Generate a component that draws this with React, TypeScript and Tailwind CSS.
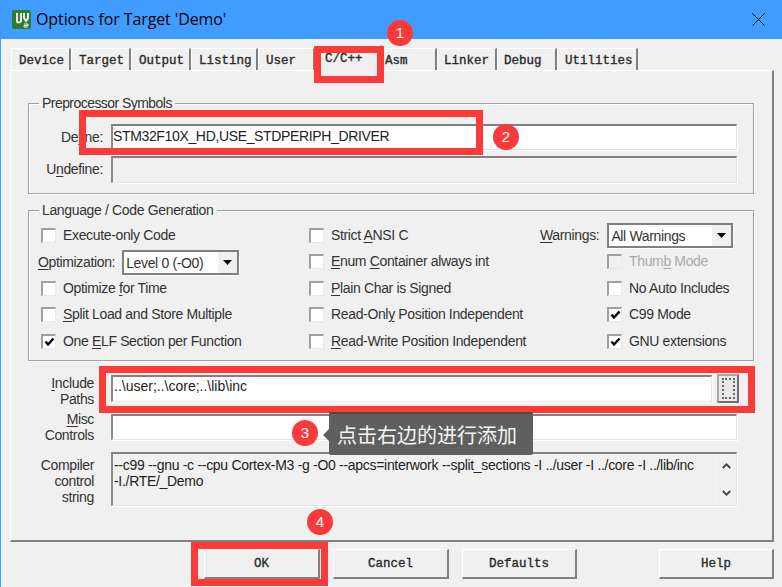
import React from "react";

const tabs = [
  { t: "Device", w: "w-[60px]", pl: "pl-[7px]" },
  { t: "Target", w: "w-[60px]", pl: "pl-[7px]" },
  { t: "Output", w: "w-[60px]", pl: "pl-[7px]" },
  { t: "Listing", w: "w-[67px]", pl: "pl-[7px]" },
  { t: "User", w: "w-[57px]", pl: "pl-[7px]" },
  { t: "C/C++", w: "w-[67px]", pl: "pl-[9px]", active: true },
  { t: "Asm", w: "w-[55px]", pl: "pl-[2px]" },
  { t: "Linker", w: "w-[60px]", pl: "pl-[6px]" },
  { t: "Debug", w: "w-[60px]", pl: "pl-[6px]" },
  { t: "Utilities", w: "w-[81px]", pl: "pl-[7px]" },
];

const monoCls = "font-['Liberation_Mono',monospace] text-[12.5px] tracking-normal text-[#2a2a2a] [-webkit-text-stroke:0.35px_#2a2a2a]";

function Tab({ t, w, pl, active }: { t: string; w: string; pl: string; active?: boolean }) {
  return active ? (
    <div className={`${w} ${pl} relative h-[26px] -mb-px border-t border-l border-white border-r-2 border-r-[#808080] bg-[#f0f0f0] pt-[4px] leading-[18px] ${monoCls}`}>
      {t}
    </div>
  ) : (
    <div className={`${w} ${pl} h-[22px] border-t border-l border-white border-r-2 border-r-[#808080] pt-[3px] leading-[18px] ${monoCls}`}>
      {t}
    </div>
  );
}

function U({ children }: { children: React.ReactNode }) {
  return <span className="underline underline-offset-2">{children}</span>;
}

function Box({ checked, disabled }: { checked?: boolean; disabled?: boolean }) {
  return (
    <span className={`flex size-[15px] shrink-0 items-center justify-center border-t-2 border-l-2 border-t-[#a0a0a0] border-l-[#a0a0a0] border-r border-b border-r-[#e8e8e8] border-b-[#e8e8e8] ${disabled ? "bg-[#f0f0f0]" : "bg-white"}`}>
      {checked && (
        <svg width="11" height="10" viewBox="0 0 11 10" fill="none">
          <path d="M1.5 4.5 L4 7.5 L9.5 1.5" stroke="#000" strokeWidth="2.4" />
        </svg>
      )}
    </span>
  );
}

function Check({ checked, disabled, children, cls = "pl-[12px]" }: { checked?: boolean; disabled?: boolean; children: React.ReactNode; cls?: string }) {
  return (
    <div className={`flex items-center gap-[7px] ${cls} ${disabled ? "text-[#aaa]" : ""}`}>
      <Box checked={checked} disabled={disabled} />
      <span>{children}</span>
    </div>
  );
}

function Select({ value, w, h }: { value: string; w: string; h: string }) {
  return (
    <div className={`${w} ${h} flex shrink-0 border-2 border-[#808080] bg-white shadow-[1px_1px_0_#fff]`}>
      <span className="flex-1 pl-[2px] leading-[22px]">{value}</span>
      <span className="flex w-[20px] items-center justify-center border-l border-white bg-[#f0f0f0]">
        <svg width="9" height="5" viewBox="0 0 9 5"><path d="M0 0h9L4.5 5z" fill="#000" /></svg>
      </span>
    </div>
  );
}

const inputCls = "border-t-2 border-l-2 border-t-[#808080] border-l-[#8a8a8a] border-r border-b border-r-[#e3e3e3] border-b-[#e3e3e3] shadow-[1px_1px_0_#fff]";

function Btn({ children, w, ml }: { children: string; w: string; ml: string }) {
  return (
    <div className={`${w} ${ml} flex h-[30px] items-center justify-center border-t border-l border-white border-r-2 border-b-2 border-r-[#808080] border-b-[#808080] bg-[#f0f0f0] pt-[2px] ${monoCls}`}>
      {children}
    </div>
  );
}

const fieldsetCls = "block w-[726px] border border-[#a0a0a0] shadow-[1px_1px_0_#fff,inset_1px_1px_0_#fff]";

export default function App() {
  return (
    <div className="relative h-[587px] w-[782px] overflow-hidden border-l border-[#409dff] bg-[#f0f0f0] font-['Liberation_Sans',sans-serif] text-[14px] tracking-[-0.35px] text-[#333]">
      <div className="flex h-[39px] items-center bg-[#409dff] pb-[1px]">
        <svg className="ml-[11px]" width="19" height="19" viewBox="0 0 19 19">
          <rect width="19" height="19" rx="2" fill="#2f7d32" />
          <path d="M5 3v8c0 2 3 2 4 0M9 3v9M12 3v5l2 3 2-3V3" stroke="#e8f3e8" strokeWidth="2" fill="none" />
          <path d="M12 14h4v1.5h-4V17h4" stroke="#e8f3e8" strokeWidth="1" fill="none" />
        </svg>
        <span className="ml-[5px] font-['Open_Sans',sans-serif] text-[16px] tracking-[-0.1px] text-black">Options for Target 'Demo'</span>
        <svg className="ml-auto mr-[17px]" width="13" height="13" viewBox="0 0 13 13"><path d="M.5.5l12 12M12.5.5l-12 12" stroke="#000" strokeWidth="1" /></svg>
      </div>

      <div className="flex h-[31px] items-end pl-[10px]">
        {tabs.map((x) => <Tab key={x.t} {...x} />)}
      </div>

      <div className="ml-[9px] h-[472px] w-[764px] border-t border-l border-t-white border-l-white border-r-2 border-b-2 border-r-[#808080] border-b-[#808080] pl-[17px] pt-[22px]">
        <fieldset className={`${fieldsetCls} h-[101px]`}>
          <legend className="ml-[10px] px-[3px] leading-[20px] tracking-[-0.55px]">Preprocessor Symbols</legend>
          <div className="grid grid-cols-[74px_626px] gap-x-[8px] gap-y-[6px] pt-[11px]">
            <div className="text-right leading-[26px]">De<U>f</U>ine:</div>
            <div className={`${inputCls} h-[26px] bg-white leading-[20px] text-[#222]`}>STM32F10X_HD,USE_STDPERIPH_DRIVER</div>
            <div className="text-right leading-[27px]">U<U>n</U>define:</div>
            <div className={`${inputCls} h-[27px]`} />
          </div>
        </fieldset>

        <fieldset className={`${fieldsetCls} mt-[6px] h-[161px]`}>
          <legend className="ml-[10px] px-[3px] leading-[20px]">Language / Code Generation</legend>
          <div className="grid grid-cols-[280px_231px_1fr] auto-rows-[26.5px] items-center pt-[2px]">
            <Check>Execute-only Code</Check>
            <Check cls="">Strict <U>A</U>NSI C</Check>
            <div className="flex items-center gap-[8px]">
              <span><U>W</U>arnings:</span>
              <Select value="All Warnings" w="w-[126px]" h="h-[25px]" />
            </div>

            <div className="mt-[1px] flex items-center gap-[7px] pl-[9px]">
              <span><U>O</U>ptimization:</span>
              <Select value="Level 0 (-O0)" w="w-[117px]" h="h-[25px]" />
            </div>
            <Check cls=""><U>E</U>num <U>C</U>ontainer always int</Check>
            <Check disabled cls="pl-[67px]">Thum<U>b</U> Mode</Check>

            <Check>Optimize <U>f</U>or Time</Check>
            <Check cls=""><U>P</U>lain Char is Signed</Check>
            <Check cls="pl-[67px]">No Auto Includes</Check>

            <Check><U>S</U>plit Load and Store Multiple</Check>
            <Check cls="">Read-Onl<U>y</U> Position Independent</Check>
            <Check checked cls="pl-[67px]">C99 Mode</Check>

            <Check checked>One <U>E</U>LF Section per Function</Check>
            <Check cls=""><U>R</U>ead-Write Position Independent</Check>
            <Check checked cls="pl-[67px]">GNU extensions</Check>
          </div>
        </fieldset>

        <div className="mt-[13px] grid grid-cols-[66px_628px] gap-x-[17px] leading-[16px]">
          <div className="pt-[1px] text-right"><U>I</U>nclude<br />Paths</div>
          <div className="flex items-start gap-[5px]">
            <div className={`${inputCls} mt-[1px] h-[27px] w-[601px] bg-white pl-[1px] leading-[18px] tracking-normal text-[#222]`}>..\user;..\core;..\lib\inc</div>
            <div className="flex h-[29px] w-[22px] items-center justify-center border-2 border-t-[#a8a8a8] border-l-[#a8a8a8] border-r-[#707070] border-b-[#707070] bg-[#e8e8e8]">
              <span className="h-[21px] w-[13px] border-2 border-dotted border-[#666]" />
            </div>
          </div>

          <div className="mt-[4px] text-right"><U>M</U>isc<br />Controls</div>
          <div className={`${inputCls} mt-[7px] h-[26px] w-[626px] bg-white`} />

          <div className="mt-[14px] text-right">Compiler<br />control<br />string</div>
          <div className={`${inputCls} mt-[9px] flex h-[54px] w-[626px] text-[#222]`}>
            <div className="flex-1 pl-[1px] pt-[3px] tracking-[-0.3px]">--c99 --gnu -c --cpu Cortex-M3 -g -O0 --apcs=interwork --split_sections -I ../user -I ../core -I ../lib/inc<br />-I./RTE/_Demo</div>
            <div className="flex w-[21px] flex-col items-center justify-between border-l border-[#f8f8f8] py-[9px]">
              <svg width="9" height="6" viewBox="0 0 9 6"><path d="M.8 5L4.5 1.3 8.2 5" stroke="#444" strokeWidth="1.8" fill="none" /></svg>
              <svg width="9" height="6" viewBox="0 0 9 6"><path d="M.8 1L4.5 4.7 8.2 1" stroke="#444" strokeWidth="1.8" fill="none" /></svg>
            </div>
          </div>
        </div>
      </div>

      <div className="mt-[7px] flex">
        <Btn w="w-[116px]" ml="ml-[203px]">OK</Btn>
        <Btn w="w-[116px]" ml="ml-[13px]">Cancel</Btn>
        <Btn w="w-[115px]" ml="ml-[13px]">Defaults</Btn>
        <Btn w="w-[115px]" ml="ml-[82px]">Help</Btn>
      </div>

      <div className="absolute left-[313px] top-[46px] h-[37px] w-[70px] border-[7px] border-[#fb3a3a]" />
      <div className="absolute left-[78px] top-[110px] h-[45px] w-[404px] border-[7px] border-[#fb3a3a]" />
      <div className="absolute left-[98px] top-[366px] h-[47px] w-[656px] border-[7px] border-[#fb3a3a]" />
      <div className="absolute left-[190px] top-[542px] h-[44px] w-[137px] border-[7px] border-[#fb3a3a]" />

      {[
        { n: "1", c: "left-[386px] top-[20px]" },
        { n: "2", c: "left-[492px] top-[124px]" },
        { n: "3", c: "left-[291px] top-[420px]" },
        { n: "4", c: "left-[306px] top-[509px]" },
      ].map((b) => (
        <div key={b.n} className={`absolute ${b.c} flex size-[26px] items-center justify-center rounded-full bg-[#f93a3a] text-[15px] tracking-normal text-white`}>{b.n}</div>
      ))}

      <div className="absolute left-[328px] top-[412px] flex h-[43px] w-[204px] items-center rounded-[2px] border-t-2 border-t-[#4a4a4a] bg-[#5f5f5f] pl-[8px] font-['Noto_Sans_CJK_SC',sans-serif] text-[20px] tracking-normal text-[#f4f4f4]">
        <span className="absolute -left-[6px] top-[15px] size-0 border-y-[6px] border-r-[6px] border-y-transparent border-r-[#5f5f5f]" />
        点击右边的进行添加
      </div>
    </div>
  );
}
